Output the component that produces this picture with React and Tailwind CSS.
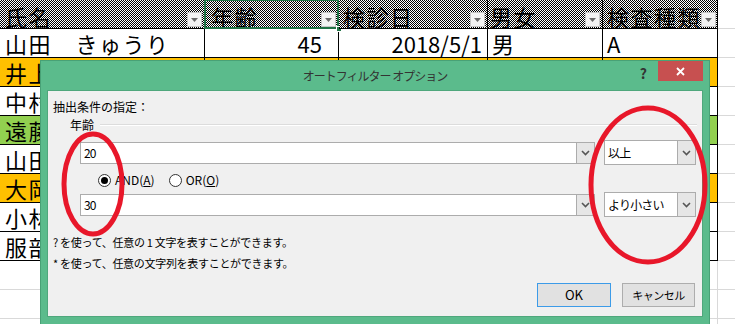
import React from "react";

const headers = [
  { label: "氏名", pl: "pl-[5px]" },
  { label: "年齢", pl: "pl-[6px]", selected: true },
  { label: "検診日", pl: "pl-[4px]" },
  { label: "男女", pl: "pl-[2px]" },
  { label: "検査種類", pl: "pl-[4px]" },
];

const rows = [
  { name: "山田　きゅうり", age: "45", date: "2018/5/1", sex: "男", type: "A", bg: "bg-white" },
  { name: "井上", bg: "bg-[#ffc000]" },
  { name: "中村", bg: "bg-white" },
  { name: "遠藤", bg: "bg-[#92d050]" },
  { name: "山田", bg: "bg-white" },
  { name: "大岡", bg: "bg-[#ffc000]" },
  { name: "小林", bg: "bg-white" },
  { name: "服部", bg: "bg-white" },
];

function FilterBtn() {
  return (
    <div className="self-end mb-[1px] w-[15px] h-[15px] shrink-0 bg-[#f2f2f2] border border-[#c6c6c6] flex items-center justify-center">
      <svg width="7" height="4" viewBox="0 0 7 4">
        <path d="M0 0h7L3.5 4z" fill="#6b6b6b" />
      </svg>
    </div>
  );
}

function Chevron() {
  return (
    <svg width="9" height="6" viewBox="0 0 9 6">
      <path d="M1 1l3.5 3.5L8 1" stroke="#555" strokeWidth="1.6" fill="none" />
    </svg>
  );
}

function Combo({ value, wide }) {
  return (
    <div
      className={`flex items-stretch bg-white border border-[#acacac] ${
        wide ? "w-[515px] h-[22px]" : "w-[92px] h-[25px]"
      }`}
    >
      <div className="flex-1 flex items-center pl-[3px] text-[12px] tracking-[-0.8px] text-black">{value}</div>
      <div className="w-[18px] bg-[#e6e6e6] border-l border-[#acacac] flex items-center justify-center">
        <Chevron />
      </div>
    </div>
  );
}

function Radio({ checked, children }) {
  return (
    <label className="flex items-center gap-[4px] text-[12px] text-black">
      <span className="w-[13px] h-[13px] rounded-full border border-[#333] bg-white flex items-center justify-center">
        {checked && <span className="w-[7px] h-[7px] rounded-full bg-black" />}
      </span>
      <span>{children}</span>
    </label>
  );
}

export default function App() {
  return (
    <div className="relative w-[735px] h-[324px] overflow-hidden bg-white text-black font-['Noto_Sans_CJK_JP','Noto_Sans',sans-serif]">
      {/* Sheet */}
      <div className="grid grid-cols-[205px_134px_149px_115px_115px_1fr]">
        {headers.map((h) => (
          <div
            key={h.label}
            className={`relative h-[29px] border-r border-b border-black flex items-center justify-between ${h.pl} pr-[2px] bg-[repeating-conic-gradient(#000_0%_25%,#fff_0%_50%)] bg-[length:2px_2px]`}
          >
            <span className="mt-[3px] text-[22px] leading-[24px] tracking-[1.5px] whitespace-nowrap">{h.label}</span>
            <FilterBtn />
            {h.selected && (
              <>
                <div className="absolute -left-px -top-px -right-px -bottom-px border-2 border-[#217346]" />
                <div className="absolute right-[-4px] bottom-[-4px] w-[6px] h-[6px] bg-[#217346] border border-white" />
              </>
            )}
          </div>
        ))}
        <div className="h-[29px] border-b border-[#d9d9d9]" />

        {rows.map((r, i) => (
          <React.Fragment key={i}>
            <div className={`h-[29px] border-r border-b border-black ${r.bg} flex items-center pl-[5px] text-[22px] leading-[24px] tracking-[1.5px] whitespace-nowrap overflow-hidden`}>
              {r.name}
            </div>
            <div className={`h-[29px] border-r border-b border-black ${r.bg} flex items-center justify-end pr-[16px] text-[22px] leading-[24px]`}>
              {r.age}
            </div>
            <div className={`h-[29px] border-r border-b border-black ${r.bg} flex items-center justify-end pr-[5px] text-[22px] leading-[24px]`}>
              {r.date}
            </div>
            <div className={`h-[29px] border-r border-b border-black ${r.bg} flex items-center pl-[4px] text-[22px] leading-[24px]`}>
              {r.sex}
            </div>
            <div className={`h-[29px] border-r border-b border-black ${r.bg} flex items-center pl-[4px] text-[22px] leading-[24px]`}>
              {r.type}
            </div>
            <div className="h-[29px] border-b border-[#d9d9d9]" />
          </React.Fragment>
        ))}

        {[0, 1, 2].map((i) => (
          <React.Fragment key={"e" + i}>
            <div className="h-[29px] border-r border-b border-[#d9d9d9]" />
            <div className="h-[29px] border-r border-b border-[#d9d9d9]" />
            <div className="h-[29px] border-r border-b border-[#d9d9d9]" />
            <div className="h-[29px] border-r border-b border-[#d9d9d9]" />
            <div className="h-[29px] border-r border-b border-[#d9d9d9]" />
            <div className="h-[29px] border-b border-[#d9d9d9]" />
          </React.Fragment>
        ))}
      </div>

      {/* Dialog */}
      <div className="absolute left-[40px] top-[60px] w-[670px] h-[266px] bg-[#5bbb8c] border border-[#48a176]">
        <div className="h-[29px] flex">
          <div className="flex-1" />
          <div className="flex items-center text-[12px] tracking-[-1px] text-[#333] pt-px whitespace-nowrap">オートフィルター オプション</div>
          <div className="flex-1 flex justify-end">
            <span className="mt-[2px] mr-[11px] text-[14px] font-bold text-[#333]">?</span>
            <div className="w-[45px] h-[20px] mr-[6px] bg-[#c75050] flex items-center justify-center">
              <svg width="9" height="9" viewBox="0 0 9 9">
                <path d="M1 1l7 7M8 1l-7 7" stroke="#fff" strokeWidth="1.8" />
              </svg>
            </div>
          </div>
        </div>

        <div className="mx-[6px] h-[227px] bg-[#f0f0f0] border border-[#4fa77c] pl-[5px] pr-[5px] pt-[9px] flex flex-col text-[12px]">
          <div className="leading-[14px]">抽出条件の指定：</div>
          <div className="mt-[4px] flex items-center pl-[17px] leading-[14px]">
            <span>年齢</span>
            <div className="flex-1 ml-[6px] border-t border-[#dcdcdc] border-b border-b-white" />
          </div>
          <div className="mt-[8px] flex items-center h-[25px] pl-[27px] gap-[9px]">
            <Combo value="20" wide />
            <Combo value="以上" />
          </div>
          <div className="mt-[8px] h-[14px] flex items-center pl-[45px] gap-[14px]">
            <Radio checked>
              AND(<u>A</u>)
            </Radio>
            <Radio>
              OR(<u>O</u>)
            </Radio>
          </div>
          <div className="mt-[5px] flex items-center h-[25px] pl-[27px] gap-[9px]">
            <Combo value="30" wide />
            <Combo value="より小さい" />
          </div>
          <div className="mt-[15px] leading-[21px] text-[11px] tracking-[-0.3px] whitespace-nowrap">? を使って、任意の 1 文字を表すことができます。</div>
          <div className="leading-[21px] text-[11px] tracking-[-0.3px] whitespace-nowrap">* を使って、任意の文字列を表すことができます。</div>
          <div className="mt-[9px] flex justify-end gap-[11px] pr-[2px]">
            <button className="w-[74px] h-[24px] bg-[#e1e1e1] border border-[#3c9be8] text-[13px]">OK</button>
            <button className="w-[73px] h-[24px] bg-[#e1e1e1] border border-[#adadad] text-[11px] tracking-[-0.5px]">キャンセル</button>
          </div>
        </div>
      </div>

      {/* Red annotation marks */}
      <svg className="absolute inset-0 pointer-events-none" width="735" height="324">
        <ellipse cx="93" cy="184" rx="29" ry="50" fill="none" stroke="#e8172a" strokeWidth="5" />
        <ellipse cx="648" cy="185" rx="57" ry="77" fill="none" stroke="#e8172a" strokeWidth="5" />
      </svg>
    </div>
  );
}
